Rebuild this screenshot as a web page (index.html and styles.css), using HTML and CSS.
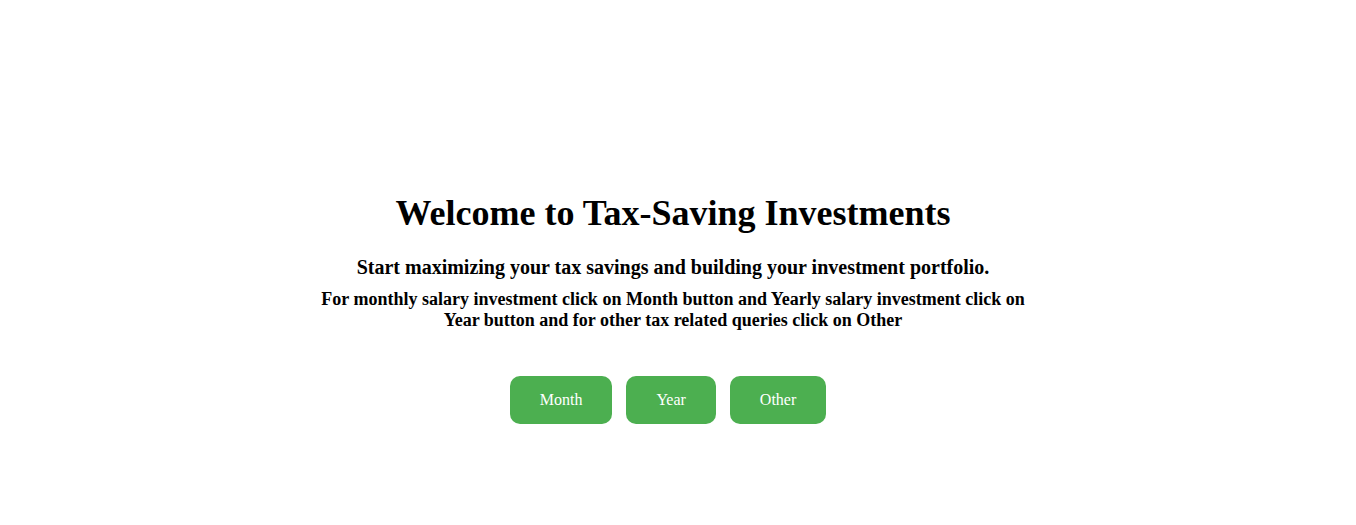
FILE: index.html
```html
<!DOCTYPE html>
<html lang="en">
<head>
<meta charset="utf-8">
<title>Tax-Saving Investments</title>
<link rel="stylesheet" href="styles.css">
</head>
<body>
<main class="welcome">
  <h1 class="welcome-title">Welcome to Tax-Saving Investments</h1>
  <h3 class="welcome-subtitle">Start maximizing your tax savings and building your investment portfolio.</h3>
  <h4 class="welcome-hint">For monthly salary investment click on Month button and Yearly salary investment click on Year button and for other tax related queries click on Other</h4>
  <div class="actions">
    <button class="btn" type="button">Month</button>
    <button class="btn" type="button">Year</button>
    <button class="btn" type="button">Other</button>
  </div>
</main>
</body>
</html>
```

FILE: styles.css
```css
html, body {
  margin: 0;
  padding: 0;
  background: #ffffff;
}
body {
  font-family: "Liberation Serif", "Times New Roman", serif;
  color: #000;
}
.welcome {
  display: flex;
  flex-direction: column;
  align-items: center;
  padding: 192px 10px 0 0;
  text-align: center;
}
.welcome-title {
  font-size: 36px;
  margin: 0 0 22px;
}
.welcome-subtitle {
  font-size: 20px;
  margin: 0 0 10px;
}
.welcome-hint {
  font-size: 18px;
  max-width: 720px;
  margin: 0 0 45px;
}
.actions {
  display: flex;
  gap: 14px;
  padding-right: 10px;
}
.btn {
  font-family: "Liberation Serif", "Times New Roman", serif;
  font-size: 16px;
  color: #fff;
  background: #4caf50;
  border: none;
  border-radius: 10px;
  padding: 15px 30px;
}
```
